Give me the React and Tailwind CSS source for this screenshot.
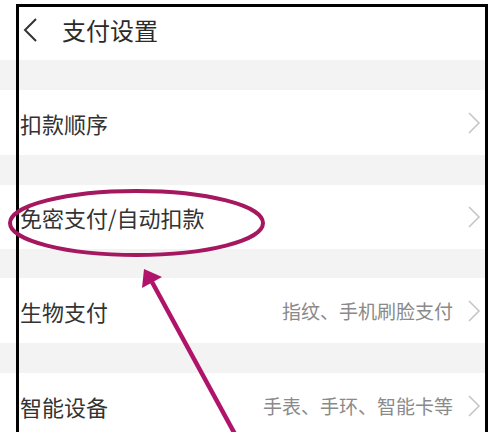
import React from "react";

const rows = [
  { label: "扣款顺序", h: "h-[65px]" },
  { label: "免密支付/自动扣款", h: "h-[64px]" },
  { label: "生物支付", value: "指纹、手机刷脸支付", h: "h-[65px]" },
  { label: "智能设备", value: "手表、手环、智能卡等", h: "h-[65px]" },
];

const bands = ["h-[30px]", "h-[30px]", "h-[29px]", "h-[30px]"];

function Chevron() {
  return (
    <svg width="14" height="22" viewBox="0 0 14 22" className="shrink-0">
      <polyline points="2,1 12,11 2,21" fill="none" stroke="#c6c6c6" strokeWidth="1.6" />
    </svg>
  );
}

export default function App() {
  return (
    <div
      className="relative w-[500px] h-[432px] overflow-hidden bg-white"
      style={{ fontFamily: '"Noto Sans CJK SC", "Noto Sans", sans-serif' }}
    >
      <div className="w-[487px] flex flex-col">
        <div className="h-[60px] flex items-center pl-[22px] gap-[24px]">
          <svg width="16" height="24" viewBox="0 0 16 24">
            <polyline points="14,1 3,12 14,23" fill="none" stroke="#333" strokeWidth="2" />
          </svg>
          <span className="text-[24px] leading-none text-[#2a2a2a]">支付设置</span>
        </div>
        {rows.map((row, i) => (
          <React.Fragment key={row.label}>
            <div className={`${bands[i]} bg-[#f3f3f3]`} />
            <div className={`${row.h} flex items-center pl-[20px] pr-[6px] bg-white`}>
              <span className="flex-1 text-[22px] leading-none text-[#333]">{row.label}</span>
              {row.value && (
                <span className="text-[19px] leading-none text-[#8a8a8a] mr-[14px]">{row.value}</span>
              )}
              <Chevron />
            </div>
          </React.Fragment>
        ))}
      </div>

      <div className="absolute left-[16px] top-[4px] w-[472px] h-[500px] border-[3px] border-black" />

      <svg className="absolute left-0 top-0" width="500" height="432" viewBox="0 0 500 432">
        <ellipse cx="136.5" cy="223" rx="126.5" ry="32" fill="none" stroke="#a5175f" strokeWidth="4" />
        <line x1="152" y1="282" x2="236" y2="436" stroke="#b0146a" strokeWidth="4.5" />
        <polygon points="144,269 162,277 142,288" fill="#b0146a" />
      </svg>
    </div>
  );
}
